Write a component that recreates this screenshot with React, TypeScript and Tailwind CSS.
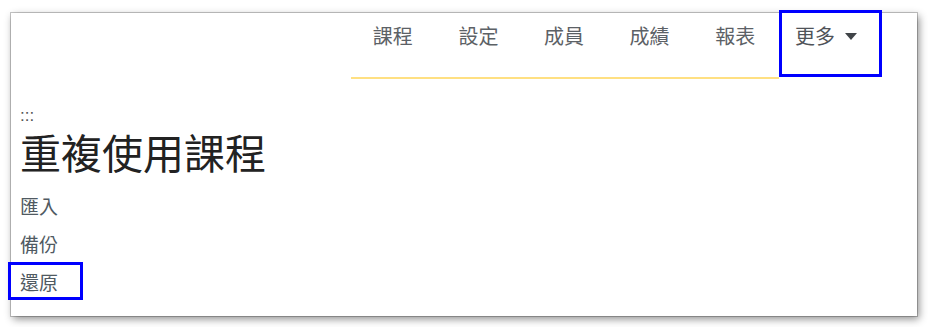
const navItems = ["課程", "設定", "成員", "成績", "報表"];
const links = ["匯入", "備份", "還原"];

const font = { fontFamily: '"Noto Sans CJK TC", "Liberation Sans", sans-serif' };

export default function App() {
  return (
    <div className="w-[928px] h-[327px] bg-white pl-[11px] pt-[13px]" style={font}>
      <div className="w-[906px] h-[303px] bg-white shadow-[0_0_0_1px_rgba(0,0,0,0.22),2px_3px_8px_rgba(0,0,0,0.45)] flex flex-col">
        <nav className="flex justify-end pr-[35px]">
          <ul className="flex border-b-2 border-[#ffe082] h-[66px]">
            {navItems.map((item) => (
              <li
                key={item}
                className="w-[85.6px] pt-[9px] pr-[2px] text-center text-[20px] leading-[28px] text-[#5c6166]"
              >
                {item}
              </li>
            ))}
          </ul>
          <div className="-mt-[3px] w-[103px] h-[67px] border-[3px] border-[#0000ff] pl-[13px] pt-[9px] flex items-start gap-[10px] text-[20px] leading-[28px] text-[#4f5358]">
            <span>更多</span>
            <svg width="12" height="7" viewBox="0 0 12 7" className="mt-[11px]">
              <path d="M0 0 L12 0 L6 7 Z" fill="#404448" />
            </svg>
          </div>
        </nav>

        <div className="pl-[9px] mt-[29px]">
          <div className="text-[17px] leading-[16px] h-[16px] text-[#555]" style={{ fontFamily: '"Liberation Sans", sans-serif' }}>
            :::
          </div>
          <h1 className="mt-[4px] text-[41px] leading-[46px] text-[#222] font-normal">重複使用課程</h1>
          <ul className="mt-[12px]">
            {links.map((l) => (
              <li
                key={l}
                className={`-ml-[12px] w-[75px] h-[38px] border-[3px] pl-[9px] pt-[3px] text-[19px] leading-[28px] text-[#505a62] ${
                  l === "還原" ? "border-[#0000ff]" : "border-transparent"
                }`}
              >
                {l}
              </li>
            ))}
          </ul>
        </div>
      </div>
    </div>
  );
}
